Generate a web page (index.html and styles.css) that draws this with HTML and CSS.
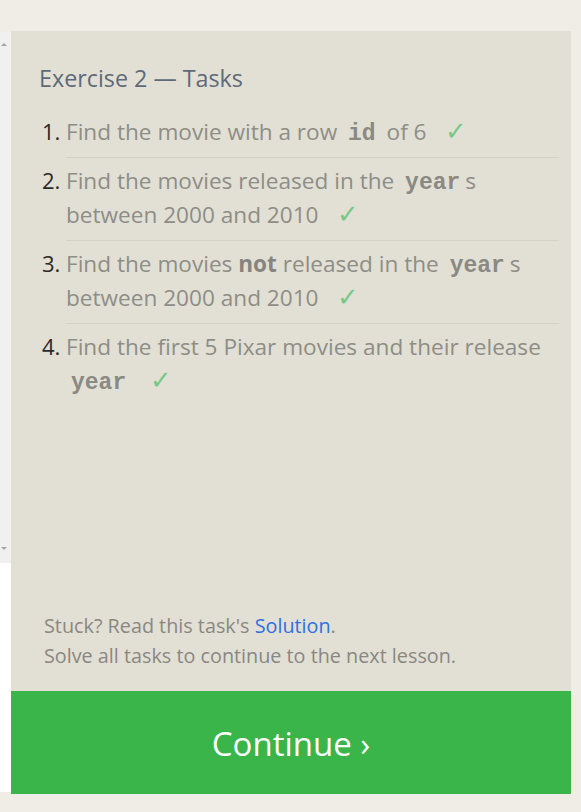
FILE: index.html
```html
<!DOCTYPE html>
<html>
<head>
<meta charset="utf-8">
<link rel="stylesheet" href="styles.css">
</head>
<body>
<div class="top"></div>
<div class="row">
  <div class="side">
    <div class="scroll">
      <span class="arr up"></span>
      <span class="arr down"></span>
    </div>
    <div class="white"></div>
  </div>
  <div class="main">
    <div class="panel">
      <h2 class="title">Exercise 2 — Tasks</h2>
      <ol class="tasks">
        <li>Find the movie with a row <code>id</code> of 6 <span class="check">✓</span></li>
        <li>Find the movies released in the <code>year</code>s between 2000 and 2010 <span class="check">✓</span></li>
        <li>Find the movies <strong>not</strong> released in the <code>year</code>s between 2000 and 2010 <span class="check">✓</span></li>
        <li class="last">Find the first 5 Pixar movies and their release <code>year</code> <span class="check">✓</span></li>
      </ol>
      <div class="foot">
        <p>Stuck? Read this task's <a href="#">Solution</a>.</p>
        <p>Solve all tasks to continue to the next lesson.</p>
      </div>
    </div>
    <div class="btn">Continue ›</div>
  </div>
</div>
</body>
</html>
```
FILE: styles.css
```css
html, body { margin: 0; padding: 0; }
body {
  background: #f0ede6;
  width: 581px;
  height: 812px;
  overflow: hidden;
  font-family: "Open Sans", "Noto Sans", sans-serif;
}
.top { height: 31px; }
.row { display: flex; }
.side { width: 11px; display: flex; flex-direction: column; padding-top: 1px; }
.scroll { height: 531px; background: #f0f0f0; position: relative; }
.white { height: 229px; background: #ffffff; }
.arr { position: absolute; left: 1px; width: 0; height: 0; border-left: 3px solid transparent; border-right: 3px solid transparent; }
.arr.up { top: 11px; border-bottom: 3px solid #a3a3a3; }
.arr.down { bottom: 13px; border-top: 3px solid #a3a3a3; }
.main { width: 560px; }
.panel {
  background: #e2e0d5;
  height: 660px;
  box-sizing: border-box;
  padding: 32px 12px 0 28px;
  display: flex;
  flex-direction: column;
}
.title {
  margin: 0 0 21px 0;
  font-weight: 400;
  font-size: 23.3px;
  color: #5e6a78;
  line-height: 30px;
}
.tasks {
  margin: 0;
  padding-left: 27px;
  color: #8e8d86;
  font-size: 22.6px;
  line-height: 34px;
}
.tasks li {
  border-bottom: 1px solid #d4d2c7;
  padding: 5px 0 8px 0;
}
.tasks li:first-child { padding-top: 0; }
.tasks li::marker { color: #2a2a2a; font-size: 22px; }
.tasks li.last { border-bottom: none; }
.tasks code {
  font-family: "Liberation Mono", monospace;
  font-weight: 700;
  font-size: 23px;
  line-height: 0;
  padding: 0 5px;
  color: #8a8983;
}
.tasks strong { color: #858480; }
.check { color: #76c886; margin-left: 13px; font-size: 26px; line-height: 0; }
.foot {
  margin-top: auto;
  padding: 0 0 20px 5px;
  color: #8a8782;
  font-size: 19.8px;
  line-height: 30px;
}
.foot p { margin: 0; }
.foot a { color: #2f6fe0; text-decoration: none; }
.btn {
  background: #3ab54a;
  height: 103px;
  color: #ffffff;
  font-size: 33px;
  padding-top: 2px;
  box-sizing: border-box;
  display: flex;
  align-items: center;
  justify-content: center;
}
```
